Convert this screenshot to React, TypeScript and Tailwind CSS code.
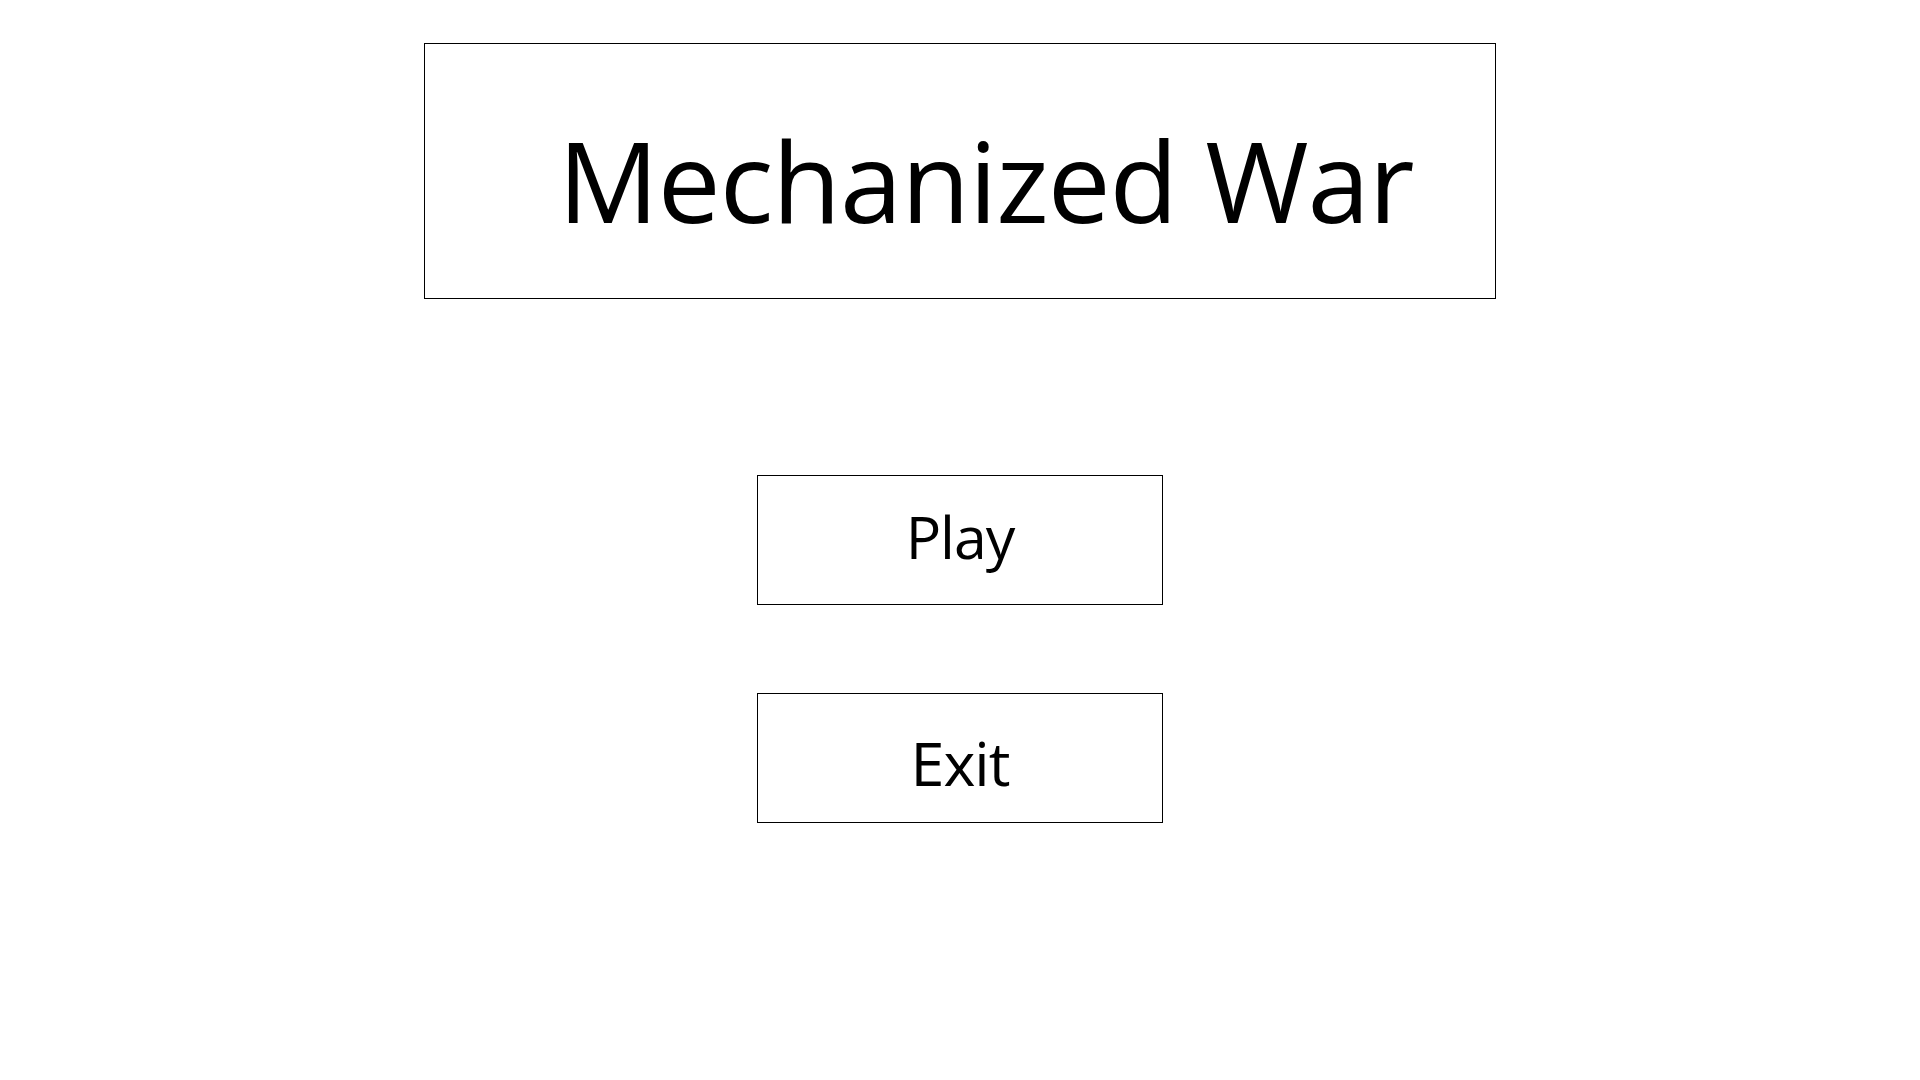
import React from 'react';

export default function App() {
  return (
    <div className="min-h-screen w-full bg-white flex flex-col items-center text-black" style={{ fontFamily: '"Open Sans", "Liberation Sans", sans-serif' }}>
      <div className="mt-[43px] w-[1072px] h-[256px] border border-black flex items-start pl-[133px] pt-[80px]">
        <h1 className="text-[112px] leading-none font-normal tracking-[-1px]">Mechanized War</h1>
      </div>

      <button className="mt-[176px] w-[406px] h-[130px] border border-black flex items-start justify-center pt-[31px]">
        <span className="text-[59px] leading-none tracking-[-1px]">Play</span>
      </button>

      <button className="mt-[88px] w-[406px] h-[130px] border border-black flex items-start justify-center pt-[38px]">
        <span className="text-[61px] leading-none tracking-[-1px]">Exit</span>
      </button>
    </div>
  );
}
